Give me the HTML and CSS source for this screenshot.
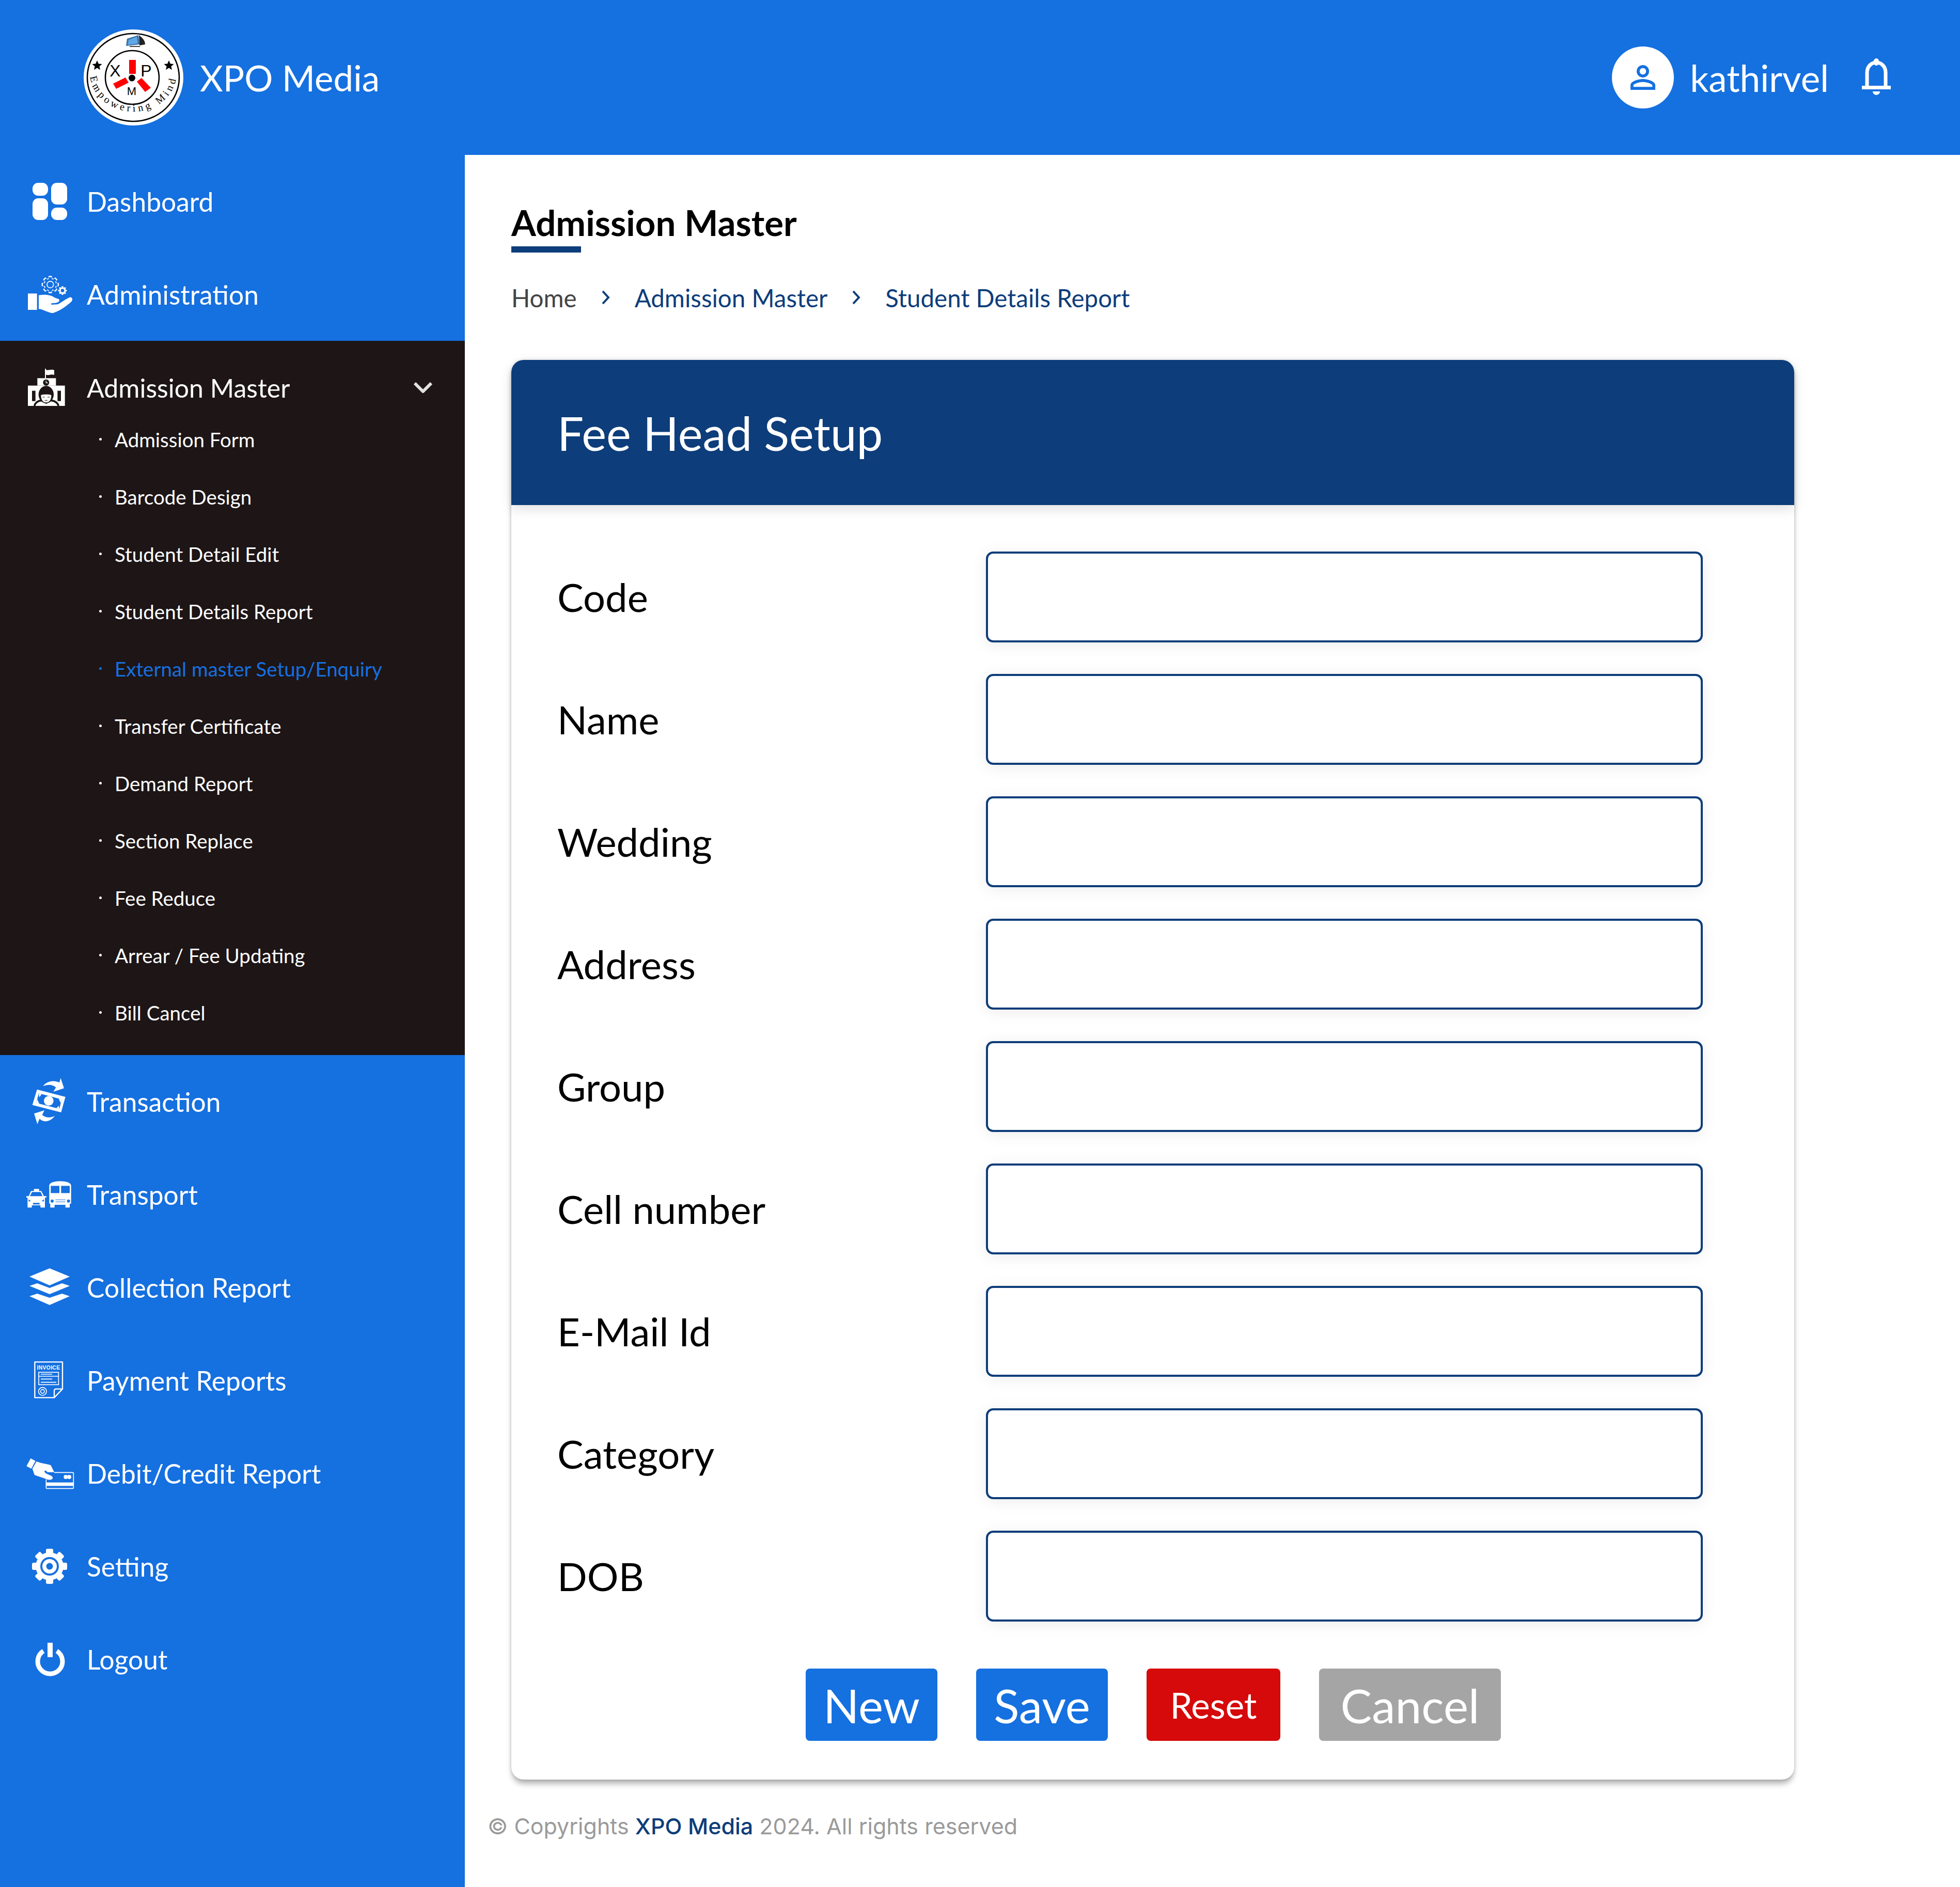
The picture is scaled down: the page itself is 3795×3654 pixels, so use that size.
FILE: index.html
```html
<!DOCTYPE html>
<html lang="en">
<head>
<meta charset="utf-8">
<title>Fee Head Setup</title>
<link rel="stylesheet" href="styles.css">
</head>
<body>
<div class="app">
  <header class="topbar">
    <div class="brand">
      <svg class="logo" viewBox="0 0 193 186">
        <ellipse cx="96.500" cy="93" rx="96.500" ry="93" fill="#fff"/>
        <ellipse cx="96" cy="93" rx="89" ry="85" fill="none" stroke="#000" stroke-width="2.600"/>
        <circle cx="94" cy="93" r="52" fill="none" stroke="#000" stroke-width="2.600"/>
        <g transform="translate(99 24)">
          <path d="M-15 -6 L7 -13 L9 5 L-17 8Z" fill="#3a6ea5"/>
          <path d="M-12 -4 L4 -10 L6 3 L-14 6Z" fill="#5fa8e8"/>
          <path d="M8 -13 C13 -9 20 -4 20 5 L9 7Z" fill="#222"/>
          <path d="M-10 8 H10 V10 H-10Z" fill="#444"/>
        </g>
        <path d="M26 60 l2.800 6.400 6.800 .6 -5.200 4.400 1.600 6.800 -6 -3.600 -6 3.600 1.600 -6.800 -5.200 -4.400 6.800 -.6z" fill="#000"/>
        <path d="M165 60 l2.800 6.400 6.800 .6 -5.200 4.400 1.600 6.800 -6 -3.600 -6 3.600 1.600 -6.800 -5.200 -4.400 6.800 -.6z" fill="#000"/>
        <path d="M88 59 H101 V86 H88Z M57 105 L81 93 L87 103 L63 115Z M112 94 L130 113 L119 121 L103 101Z" fill="#f00"/>
        <circle cx="93.500" cy="94" r="6.500" fill="#000"/>
        <text class="logo-big" x="61" y="91">X</text>
        <text class="logo-big" x="121" y="91">P</text>
        <text class="logo-small" x="93" y="127">M</text>
        <path id="logo-arc" d="M12 84 A84 75 0 0 0 180 84" fill="none"/>
        <text class="logo-arc-text"><textPath href="#logo-arc" startOffset="50%">Empowering Mind</textPath></text>
      </svg>
      <span class="brand-name">XPO Media</span>
    </div>
    <div class="account">
      <span class="avatar">
        <svg class="avatar-icon" viewBox="0 0 24 24"><path d="M12 5.900c1.160 0 2.100.94 2.100 2.100s-.94 2.100-2.100 2.100S9.900 9.160 9.900 8s.94-2.100 2.100-2.100m0 9c2.970 0 6.100 1.460 6.100 2.100v1.100H5.900V17c0-.64 3.130-2.100 6.100-2.100M12 4C9.790 4 8 5.790 8 8s1.790 4 4 4 4-1.790 4-4-1.790-4-4-4zm0 9c-2.670 0-8 1.340-8 4v3h16v-3c0-2.660-5.330-4-8-4z"/></svg>
      </span>
      <span class="user-name">kathirvel</span>
      <svg class="bell" viewBox="0 0 56 71">
        <rect x="0" y="53" width="56" height="7" fill="#fff"/>
        <path d="M10 53 V28 C10 16 18 8 28 8 C38 8 46 16 46 28 V53" fill="none" stroke="#fff" stroke-width="7"/>
        <ellipse cx="28" cy="7" rx="5.500" ry="7" fill="#fff"/>
        <path d="M21 64 H35 C35 73 21 73 21 64Z" fill="#fff"/>
      </svg>
    </div>
  </header>

  <div class="body-row">
    <nav class="sidebar">
      <a class="nav-item">
        <svg class="nav-icon" viewBox="0 0 100 90">
          <rect x="16" y="9" width="30" height="25" rx="11" fill="#fff"/>
          <rect x="16" y="39" width="30" height="42" rx="11" fill="#fff"/>
          <rect x="52" y="9" width="31" height="42" rx="11" fill="#fff"/>
          <rect x="52" y="57" width="31" height="24" rx="11" fill="#fff"/>
        </svg>
        <span>Dashboard</span>
      </a>
      <a class="nav-item">
        <svg class="nav-icon" viewBox="0 0 100 90">
          <defs>
            <g id="gear8">
              <circle r="38"/>
              <rect x="-10" y="-50" width="20" height="100" rx="3"/>
              <rect x="-10" y="-50" width="20" height="100" rx="3" transform="rotate(45)"/>
              <rect x="-10" y="-50" width="20" height="100" rx="3" transform="rotate(90)"/>
              <rect x="-10" y="-50" width="20" height="100" rx="3" transform="rotate(135)"/>
            </g>
          </defs>
          <g transform="translate(-7 -5) scale(.3333)">
            <rect x="42" y="145" width="53" height="95" fill="#fff"/>
            <path d="M105 155 C135 150 170 150 200 170 L222 178 C232 190 215 200 200 200 L178 202 L178 210 L215 208 C240 195 265 175 285 167 C300 165 305 180 295 192 C270 215 230 245 190 258 C165 262 130 235 105 235Z" fill="#fff"/>
            <use href="#gear8" transform="translate(172 93)" fill="#fff"/>
            <use href="#gear8" transform="translate(172 93) scale(.86)" fill="#1570e0"/>
            <circle cx="172" cy="93" r="19" fill="none" stroke="#fff" stroke-width="5"/>
            <use href="#gear8" transform="translate(243 128) scale(.5)" fill="#fff"/>
            <circle cx="243" cy="128" r="10" fill="#1570e0"/>
          </g>
        </svg>
        <span>Administration</span>
      </a>
      <div class="nav-group">
        <a class="nav-item nav-item-open">
          <svg class="nav-icon" viewBox="0 0 100 90">
            <g transform="translate(-7 -6) scale(.3333)">
              <rect x="141" y="42" width="6" height="55" fill="#fff"/>
              <path d="M147 48 C160 55 175 42 195 50 V78 C175 70 160 84 147 76Z" fill="#fff"/>
              <rect x="97" y="97" width="108" height="43" fill="#fff"/>
              <rect x="42" y="140" width="215" height="118" fill="#fff"/>
              <circle cx="148" cy="122" r="18" fill="#1d1516"/>
              <path d="M148 111 V124 H159" fill="none" stroke="#fff" stroke-width="4"/>
              <rect x="66" y="170" width="20" height="60" fill="#1d1516"/>
              <rect x="214" y="170" width="20" height="60" fill="#1d1516"/>
              <path d="M80 258 C85 235 105 228 122 226 L148 240 L176 226 C195 228 214 235 220 258" fill="#fff" stroke="#1d1516" stroke-width="11"/>
              <ellipse cx="148" cy="192" rx="44" ry="50" fill="#1d1516"/>
              <path d="M118 195 C130 190 166 190 178 195 C178 225 165 238 148 238 C131 238 118 225 118 195Z" fill="#fff"/>
              <path d="M128 207 H140 M156 207 H168 M140 226 H156" stroke="#1d1516" stroke-width="3"/>
            </g>
          </svg>
          <span>Admission Master</span>
          <svg class="chevron" viewBox="0 0 36 21"><path d="M2 2 L18 18 L34 2" fill="none" stroke="#e2e2e2" stroke-width="6"/></svg>
        </a>
        <ul class="sub-list">
          <li class="sub-item">Admission Form</li>
          <li class="sub-item">Barcode Design</li>
          <li class="sub-item">Student Detail Edit</li>
          <li class="sub-item">Student Details Report</li>
          <li class="sub-item sub-item-active">External master Setup/Enquiry</li>
          <li class="sub-item">Transfer Certificate</li>
          <li class="sub-item">Demand Report</li>
          <li class="sub-item">Section Replace</li>
          <li class="sub-item">Fee Reduce</li>
          <li class="sub-item">Arrear / Fee Updating</li>
          <li class="sub-item">Bill Cancel</li>
        </ul>
      </div>
      <a class="nav-item">
        <svg class="nav-icon" viewBox="0 0 100 90">
          <g transform="translate(-7 -9) scale(.3333)" fill="#fff">
            <path d="M130 73 C150 45 190 35 225 52 L232 25 L252 85 L190 105 L205 80 C185 62 155 62 130 73Z"/>
            <path d="M198 245 C178 275 135 290 110 262 L97 293 L78 232 L138 213 L125 240 C145 258 175 258 198 245Z"/>
            <path d="M95 92 L260 135 L235 225 L68 182Z"/>
            <path d="M105 114 L238 149 L225 205 L91 170Z" fill="#1570e0"/>
            <circle cx="163" cy="158" r="28"/>
            <path d="M105 114 L122 119 L108 137Z M238 149 L221 145 L232 170Z M91 170 L108 175 L97 150Z M225 205 L208 200 L221 187Z"/>
          </g>
        </svg>
        <span>Transaction</span>
      </a>
      <a class="nav-item">
        <svg class="nav-icon" viewBox="0 0 100 90">
          <g transform="translate(-7 -189) scale(.3333)" fill="#fff">
            <path d="M166 650 C166 616 293 616 293 650 V755 H285 V778 H260 V762 H197 V778 H172 V755 H166Z"/>
            <rect x="175" y="652" width="50" height="42" fill="#1570e0"/>
            <rect x="235" y="652" width="50" height="42" fill="#1570e0"/>
            <circle cx="183" cy="740" r="9" fill="#1570e0"/>
            <circle cx="278" cy="740" r="9" fill="#1570e0"/>
            <path d="M202 733 H260 M202 745 H260" stroke="#1570e0" stroke-width="3"/>
            <path d="M77 670 H107 V682 H120 L135 712 H150 V720 H141 V778 H115 V765 H65 V778 H40 V720 H33 V712 H47 L60 682 H77Z"/>
            <path d="M66 688 H116 L127 712 H54Z" fill="#1570e0"/>
            <path d="M46 730 L60 742 H46Z M135 730 L121 742 H135Z" fill="#1570e0"/>
            <rect x="72" y="751" width="38" height="9" fill="#1570e0"/>
          </g>
        </svg>
        <span>Transport</span>
      </a>
      <a class="nav-item">
        <svg class="nav-icon" viewBox="0 0 100 90">
          <g fill="#fff">
            <path d="M10 24 L49 8 L88 24 L49 41Z"/>
            <path d="M10 42 L25 37 L49 46 L73 37 L88 42 L49 58Z"/>
            <path d="M10 62 L25 57 L49 65 L73 57 L88 62 L49 79Z"/>
          </g>
        </svg>
        <span>Collection Report</span>
      </a>
      <a class="nav-item">
        <svg class="nav-icon" viewBox="0 0 100 90">
          <g transform="translate(-7 1) scale(.3333)">
            <path d="M82 25 H243 V182 L195 232 H82Z" fill="none" stroke="#fff" stroke-width="7" stroke-linejoin="round"/>
            <path d="M243 182 H205 Q195 182 195 192 V232" fill="none" stroke="#fff" stroke-width="7"/>
            <text class="invoice-text" x="162" y="70">INVOICE</text>
            <rect x="105" y="85" width="115" height="72" fill="none" stroke="#fff" stroke-width="5"/>
            <path d="M105 108 H220 M117 96 H183 M117 124 H183 M117 143 H207" fill="none" stroke="#fff" stroke-width="5"/>
            <circle cx="127" cy="196" r="23" fill="none" stroke="#fff" stroke-width="5"/>
            <circle cx="127" cy="196" r="11" fill="none" stroke="#fff" stroke-width="5"/>
          </g>
        </svg>
        <span>Payment Reports</span>
      </a>
      <a class="nav-item">
        <svg class="nav-icon" viewBox="0 0 100 90">
          <g transform="translate(-7 -179) scale(.3333)" fill="#fff">
            <path d="M58 585 L86 600 L62 645 L34 630Z"/>
            <path d="M92 603 C120 615 160 618 175 625 L195 665 H155 C145 650 135 655 140 665 C150 680 180 680 186 695 C188 708 170 712 155 708 C125 695 100 690 80 680 L68 645Z"/>
            <path d="M195 667 H302 Q307 667 307 672 V755 Q307 760 302 760 H153 Q148 760 148 755 V708" fill="none" stroke="#fff" stroke-width="5"/>
            <rect x="150" y="725" width="156" height="20"/>
            <circle cx="262" cy="693" r="12"/>
            <circle cx="282" cy="693" r="12"/>
          </g>
        </svg>
        <span>Debit/Credit Report</span>
      </a>
      <a class="nav-item">
        <svg class="nav-icon" viewBox="0 0 100 90">
          <g transform="translate(49 45)" fill="#fff">
            <circle r="27"/>
            <rect x="-7" y="-34" width="14" height="68" rx="3"/>
            <rect x="-7" y="-34" width="14" height="68" rx="3" transform="rotate(45)"/>
            <rect x="-7" y="-34" width="14" height="68" rx="3" transform="rotate(90)"/>
            <rect x="-7" y="-34" width="14" height="68" rx="3" transform="rotate(135)"/>
            <circle r="18" fill="#1570e0"/>
            <circle r="14"/>
            <circle r="6.500" fill="#1570e0"/>
          </g>
        </svg>
        <span>Setting</span>
      </a>
      <a class="nav-item">
        <svg class="nav-icon" viewBox="0 0 100 90">
          <path d="M37 29 A24 24 0 1 0 63 29" fill="none" stroke="#fff" stroke-width="9"/>
          <rect x="45" y="13" width="10" height="28" fill="#fff"/>
        </svg>
        <span>Logout</span>
      </a>
    </nav>

    <main class="content">
      <h1 class="page-title">Admission Master</h1>
      <div class="title-rule"></div>
      <div class="breadcrumb">
        <span class="crumb-home">Home</span>
        <svg class="crumb-sep" viewBox="0 0 20 30"><path d="M4 3 L15 15 L4 27" fill="none" stroke="#0d3d7a" stroke-width="4"/></svg>
        <span>Admission Master</span>
        <svg class="crumb-sep" viewBox="0 0 20 30"><path d="M4 3 L15 15 L4 27" fill="none" stroke="#0d3d7a" stroke-width="4"/></svg>
        <span>Student Details Report</span>
      </div>
      <section class="card">
        <h2 class="card-head">Fee Head Setup</h2>
        <form class="form">
          <div class="row"><label class="row-label">Code</label><input class="row-input" type="text"></div>
          <div class="row"><label class="row-label">Name</label><input class="row-input" type="text"></div>
          <div class="row"><label class="row-label">Wedding</label><input class="row-input" type="text"></div>
          <div class="row"><label class="row-label">Address</label><input class="row-input" type="text"></div>
          <div class="row"><label class="row-label">Group</label><input class="row-input" type="text"></div>
          <div class="row"><label class="row-label">Cell number</label><input class="row-input" type="text"></div>
          <div class="row"><label class="row-label">E-Mail Id</label><input class="row-input" type="text"></div>
          <div class="row"><label class="row-label">Category</label><input class="row-input" type="text"></div>
          <div class="row"><label class="row-label">DOB</label><input class="row-input" type="text"></div>
          <div class="actions">
            <button class="btn btn-new" type="button">New</button>
            <button class="btn btn-save" type="button">Save</button>
            <button class="btn btn-reset" type="button">Reset</button>
            <button class="btn btn-cancel" type="button">Cancel</button>
          </div>
        </form>
      </section>
      <footer class="footer">© Copyrights <strong class="footer-brand">XPO Media</strong> 2024. All rights reserved</footer>
    </main>
  </div>
</div>
</body>
</html>
```
FILE: styles.css
```css
* { box-sizing: border-box; }
html, body { margin: 0; height: 100%; }
body { font-family: "Lato", "Open Sans", sans-serif; color: #000; background: #fff; }
.app { height: 3654px; display: flex; flex-direction: column; overflow: hidden; }

.topbar { height: 300px; flex: none; background: #1570e0; color: #fff; display: flex; align-items: center; justify-content: space-between; padding: 0 134px 0 162px; }
.brand { display: flex; align-items: center; gap: 32px; }
.logo { width: 193px; height: 186px; display: block; }
.logo-big { font: 32px "Liberation Sans", sans-serif; text-anchor: middle; fill: #000; }
.logo-small { font: 22px "Liberation Sans", sans-serif; text-anchor: middle; fill: #000; }
.logo-arc-text { font: 20px "Liberation Serif", serif; letter-spacing: 5.500px; text-anchor: middle; fill: #000; }
.brand-name { font-size: 69px; line-height: 1; }
.account { display: flex; align-items: center; }
.avatar { width: 120px; height: 120px; border-radius: 50%; background: #fff; display: flex; align-items: center; justify-content: center; }
.avatar-icon { width: 72px; height: 72px; fill: #1570e0; }
.user-name { font-size: 71px; line-height: 1; margin: 0 64px 0 31px; }
.bell { width: 56px; height: 71px; display: block; margin-top: -4px; }

.body-row { flex: 1; display: flex; min-height: 0; }
.sidebar { width: 900px; flex: none; background: #1570e0; color: #fff; }
.nav-item { height: 180px; display: flex; align-items: center; gap: 21px; padding-left: 47px; font-size: 51.500px; }
.nav-icon { width: 100px; height: 90px; flex: none; display: block; }
.nav-group { background: #1d1516; padding: 46px 0 27px; }
.nav-item-open { height: 89px; padding-right: 63px; font-size: 50px; }
.chevron { width: 36px; height: 21px; margin-left: auto; }
.sub-list { list-style: none; margin: 0; padding: 0; }
.sub-item { height: 111px; display: flex; align-items: center; padding-left: 192px; font-size: 38.500px; position: relative; }
.sub-item::before { content: ""; width: 5px; height: 5px; border-radius: 50%; background: currentColor; margin-right: 25px; }
.sub-item-active { color: #1570e0; }

.content { flex: 1; padding: 91px 0 0 90px; min-width: 0; }
.page-title { margin: 0; font-size: 69px; line-height: 80px; font-weight: 700; }
.title-rule { width: 135px; height: 12px; background: #0d3d7a; margin-top: 6px; }
.breadcrumb { display: flex; align-items: center; margin-top: 57px; height: 60px; font-size: 47.500px; color: #0d3d7a; }
.crumb-home { color: #444; }
.crumb-sep { width: 20px; height: 30px; margin: 0 46px; flex: none; }

.card { width: 2484px; height: 2749px; margin-top: 91px; border-radius: 24px; background: #fff; box-shadow: 0 10px 12px -2px rgba(0,0,0,.3), 0 0 6px rgba(0,0,0,.15); }
.card-head { margin: 0; height: 281px; display: flex; align-items: center; padding-left: 89px; background: #0d3d7a; color: #fff; font-size: 90.500px; font-weight: 400; border-radius: 24px 24px 0 0; box-shadow: 0 8px 24px rgba(0,0,0,.12); }
.form { display: flex; flex-direction: column; gap: 61px; padding: 90px 0 0 89px; }
.row { display: flex; align-items: center; }
.row-label { width: 830px; font-size: 76px; line-height: 1; flex: none; }
.row-input { width: 1388px; height: 176px; border: 4px solid #0d3d7a; border-radius: 14px; background: #fff; box-shadow: 0 4px 30px rgba(0,0,0,.08); display: block; }
.actions { display: flex; justify-content: center; gap: 75px; margin: 30px 0 0 -87px; }
.btn { height: 140px; border: 0; border-radius: 8px; color: #fff; font-family: inherit; font-size: 91px; line-height: 1; padding: 0; display: flex; align-items: center; justify-content: center; }
.btn-new { width: 255px; background: #1570e0; }
.btn-save { width: 255px; background: #1570e0; }
.btn-reset { width: 259px; background: #d60a0a; font-size: 69px; }
.btn-cancel { width: 352px; background: #a5a5a5; }

.footer { margin: 60px 0 0 -46px; height: 60px; line-height: 60px; font-family: "Inter", "Lato", sans-serif; font-size: 43px; color: #9a9a9a; }
.footer-brand { font-weight: 500; color: #0d3d7a; }
.invoice-text { font: bold 31px "Liberation Sans", sans-serif; text-anchor: middle; fill: #fff; letter-spacing: 1px; }
```
